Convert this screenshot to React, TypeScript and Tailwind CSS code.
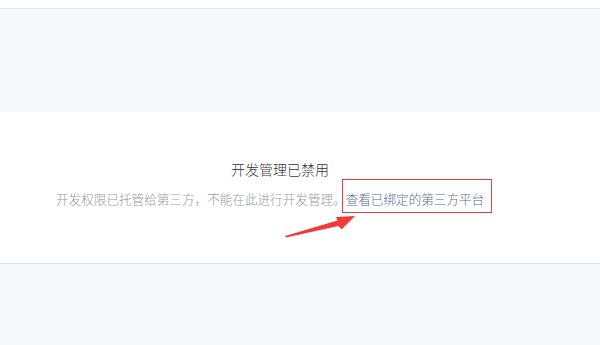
const cjk = { fontFamily: '"Microsoft YaHei", "Noto Sans CJK SC", "Noto Sans", sans-serif' };

function Arrow() {
  return (
    <svg
      className="absolute left-[285px] top-[93px] h-[36px] w-[75px]"
      viewBox="0 0 75 36"
    >
      <polygon
        points="70,11 51,12 52.5,15.5 0,31 1,32.5 53.5,21 56.5,24.5"
        fill="#f23a3a"
      />
    </svg>
  );
}

export default function App() {
  return (
    <div className="min-h-[345px] w-[600px] bg-[#f7f8fa]" style={cjk}>
      <div className="h-[9px] border-b border-[#e7e7eb] bg-white" />
      <div className="h-[103px]" />
      <section className="relative h-[152px] border-b border-[#dfe1e5] bg-white">
        <div className="pl-[231px] pt-[47px] text-[14px] font-light leading-[20px] text-[#353535]">
          开发管理已禁用
        </div>
        <div className="mt-[10px] pl-[56px] text-[12.6px] font-light leading-[20px] text-[#9a9a9a]">
          开发权限已托管给第三方，不能在此进行开发管理。
          <span className="relative inline-block">
            <a className="text-[#576b95]">查看已绑定的第三方平台</a>
            <i className="absolute -left-[4px] -right-[8px] -top-[10px] -bottom-[4px] border border-[#ee3b3b]" />
          </span>
        </div>
        <Arrow />
      </section>
    </div>
  );
}
